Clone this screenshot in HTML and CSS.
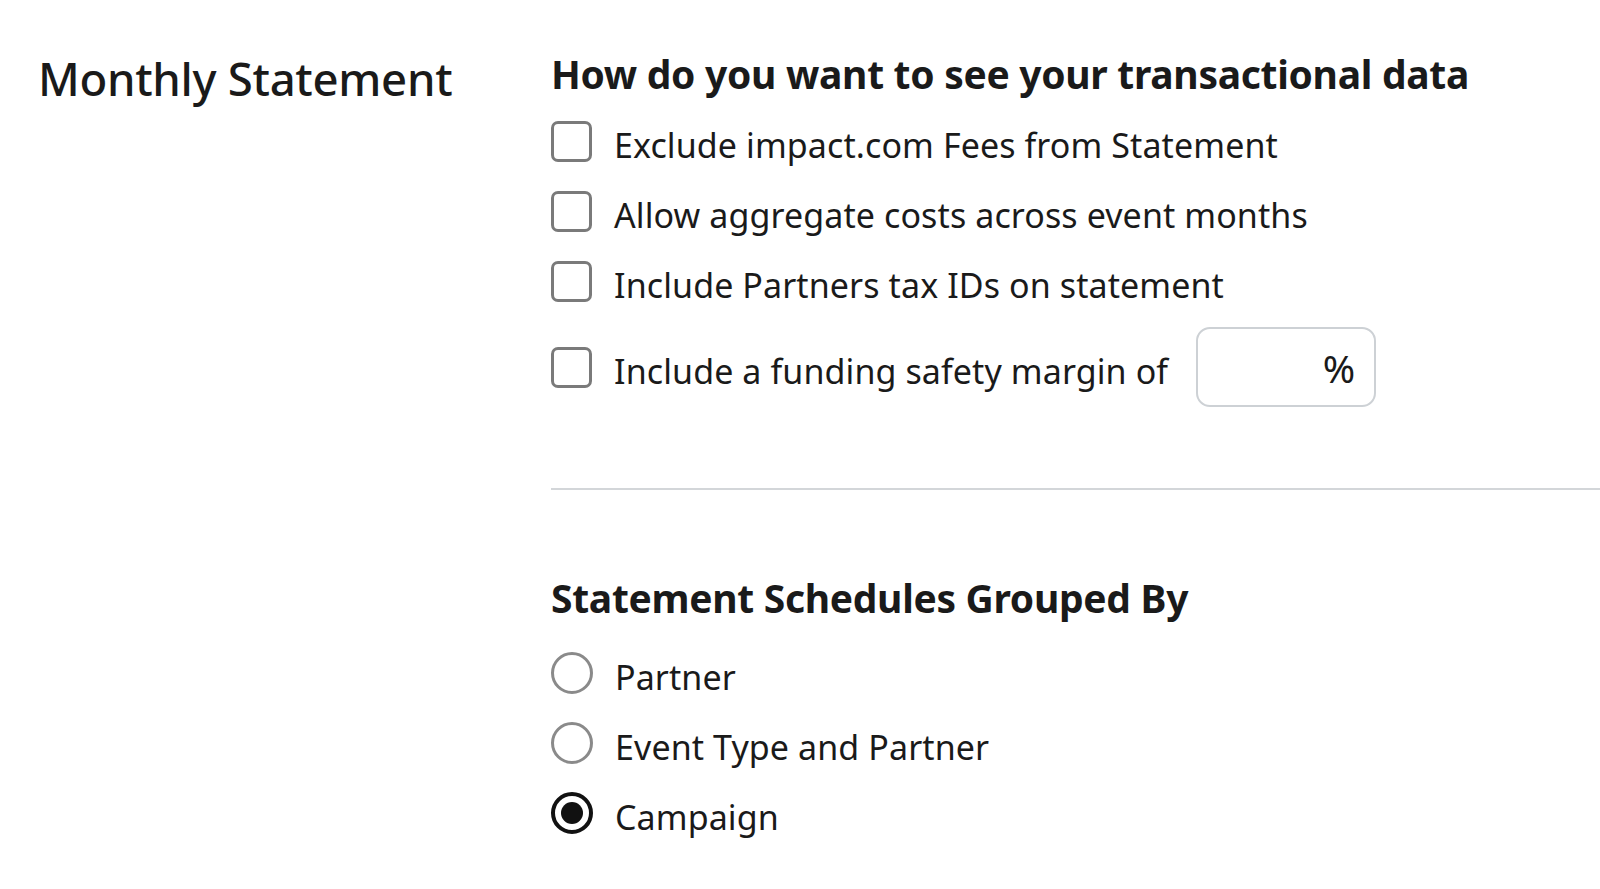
FILE: index.html
```html
<!DOCTYPE html>
<html>
<head>
<meta charset="utf-8">
<link rel="stylesheet" href="styles.css">
</head>
<body>
<div class="page">
  <div class="side">
    <h1 class="title">Monthly Statement</h1>
  </div>
  <div class="main">
    <h2 class="heading">How do you want to see your transactional data</h2>
    <div class="options">
      <label class="opt"><span class="box"></span><span class="lbl">Exclude impact.com Fees from Statement</span></label>
      <label class="opt"><span class="box"></span><span class="lbl">Allow aggregate costs across event months</span></label>
      <label class="opt"><span class="box"></span><span class="lbl">Include Partners tax IDs on statement</span></label>
      <label class="opt opt-margin"><span class="box"></span><span class="lbl">Include a funding safety margin of</span><span class="pct"><span class="pct-sign">%</span></span></label>
    </div>
    <hr class="divider">
    <h2 class="heading heading2">Statement Schedules Grouped By</h2>
    <div class="radios">
      <label class="opt"><span class="radio"></span><span class="lbl">Partner</span></label>
      <label class="opt"><span class="radio"></span><span class="lbl">Event Type and Partner</span></label>
      <label class="opt"><span class="radio checked"></span><span class="lbl">Campaign</span></label>
    </div>
  </div>
</div>
</body>
</html>
```

FILE: styles.css
```css
html, body {
  margin: 0;
  padding: 0;
  background: #ffffff;
}
body {
  font-family: "Noto Sans", "Open Sans", sans-serif;
  color: #1a1a1a;
}
.page {
  display: grid;
  grid-template-columns: 551px 1fr;
  padding-top: 46px;
  padding-bottom: 40px;
}
.side {
  padding-left: 38px;
}
.title {
  margin: 0;
  font-size: 45.5px;
  font-weight: 500;
  line-height: 64px;
  letter-spacing: -0.3px;
}
.main {
  display: flex;
  flex-direction: column;
}
.heading {
  margin: 0;
  font-size: 39px;
  font-weight: 700;
  line-height: 56px;
  letter-spacing: -0.3px;
}
.options {
  display: flex;
  flex-direction: column;
  margin-top: 18px;
  gap: 28px;
}
.opt {
  display: flex;
  align-items: center;
  height: 42px;
}
.opt-margin {
  height: 80px;
  margin-top: -3px;
}
.box {
  box-sizing: border-box;
  width: 41px;
  height: 41px;
  border: 3px solid #7a7a7a;
  border-radius: 7px;
  flex: none;
}
.lbl {
  margin-left: 22px;
  margin-top: 4px;
  margin-bottom: -4px;
  font-size: 34px;
  line-height: 42px;
  letter-spacing: 0.1px;
  color: #1a1a1a;
}
.pct {
  box-sizing: border-box;
  margin-left: 28px;
  width: 180px;
  height: 80px;
  border: 2px solid #cdd1d5;
  border-radius: 14px;
  display: flex;
  align-items: center;
  justify-content: flex-end;
  padding-right: 19px;
}
.pct-sign {
  font-size: 39px;
  color: #1a1a1a;
}
.divider {
  margin: 81px 0 0 0;
  border: none;
  border-top: 2px solid #d3d6d9;
  height: 0;
}
.heading2 {
  margin-top: 80px;
}
.radios {
  display: flex;
  flex-direction: column;
  margin-top: 26px;
  gap: 28px;
}
.radio {
  box-sizing: border-box;
  width: 42px;
  height: 42px;
  border: 3px solid #8a8a8a;
  border-radius: 50%;
  flex: none;
  display: flex;
  align-items: center;
  justify-content: center;
}
.radio.checked {
  border: 4px solid #111111;
}
.radio.checked::after {
  content: "";
  width: 22px;
  height: 22px;
  border-radius: 50%;
  background: #111111;
}
```
